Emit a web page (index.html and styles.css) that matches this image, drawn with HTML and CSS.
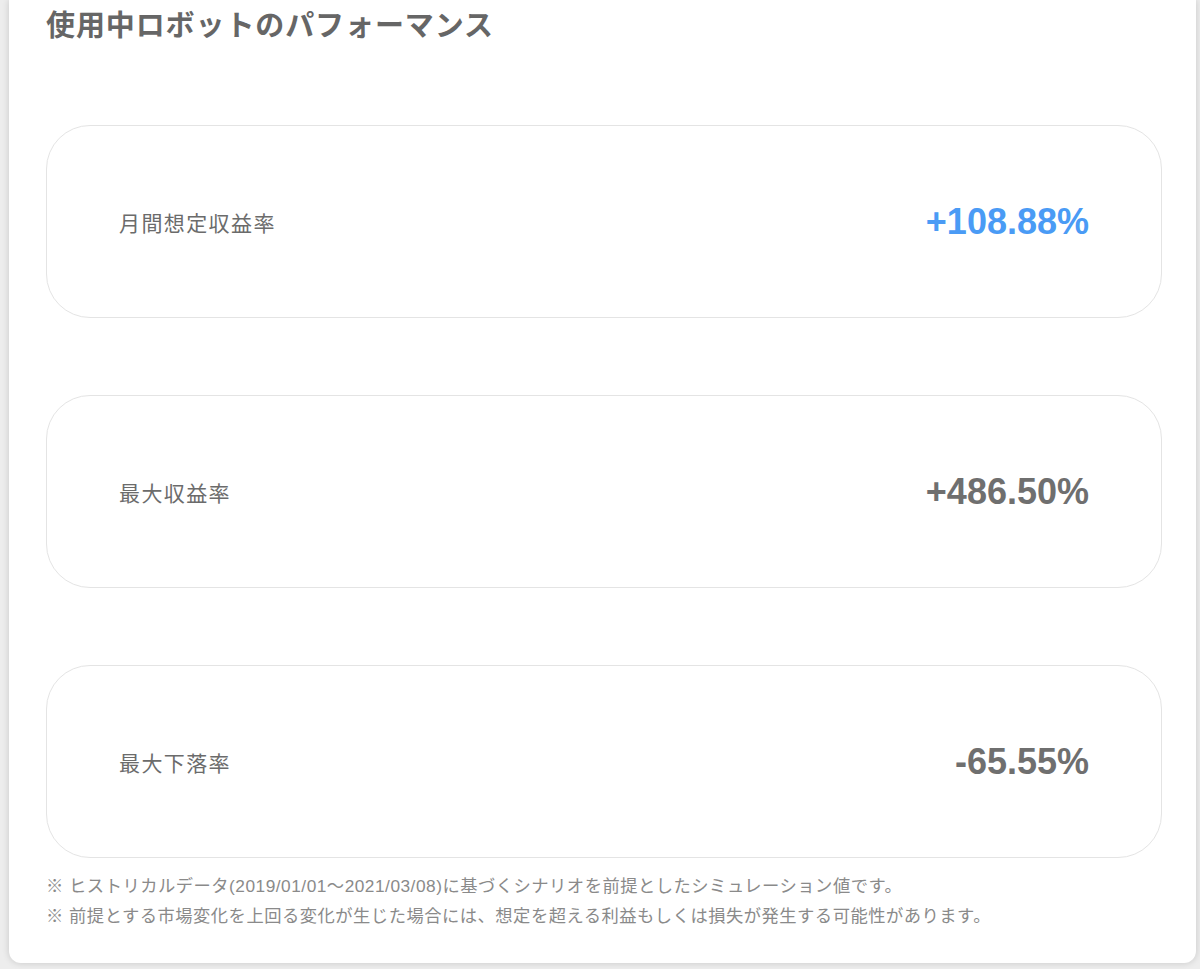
FILE: index.html
```html
<!DOCTYPE html>
<html lang="ja">
<head>
    <meta charset="UTF-8">
    <meta name="viewport" content="width=device-width, initial-scale=1.0">
    <title>使用中ロボットのパフォーマンス</title>
    <link rel="stylesheet" href="styles.css">
</head>
<body>

    <section class="panel">
        <h2 class="panel-title">使用中ロボットのパフォーマンス</h2>

        <div class="stat-list">
            <div class="stat-card">
                <span class="stat-label">月間想定収益率</span>
                <span class="stat-value stat-value--up">+108.88%</span>
            </div>
            <div class="stat-card">
                <span class="stat-label">最大収益率</span>
                <span class="stat-value">+486.50%</span>
            </div>
            <div class="stat-card">
                <span class="stat-label">最大下落率</span>
                <span class="stat-value">-65.55%</span>
            </div>
        </div>

        <ul class="notes">
            <li>※ ヒストリカルデータ(2019/01/01～2021/03/08)に基づくシナリオを前提としたシミュレーション値です。</li>
            <li>※ 前提とする市場変化を上回る変化が生じた場合には、想定を超える利益もしくは損失が発生する可能性があります。</li>
        </ul>
    </section>

</body>
</html>
```

FILE: styles.css
```css
html, body {
    margin: 0;
    background-color: #ededed;
}

body {
    font-family: 'Liberation Sans', 'Noto Sans CJK JP', sans-serif;
    color: #666666;
    padding: 0 4px 6px 9px;
    box-sizing: border-box;
    min-height: 969px;
}

.panel {
    background-color: #ffffff;
    border-radius: 0 0 12px 12px;
    box-shadow: 0 0 7px rgba(0, 0, 0, 0.16);
    padding: 5px 34px 32px 37px;
}

.panel-title {
    margin: 0;
    font-size: 29px;
    line-height: 42px;
    font-weight: bold;
    letter-spacing: 0.9px;
    color: #666666;
}

.stat-list {
    display: flex;
    flex-direction: column;
    gap: 77px;
    margin-top: 78px;
}

.stat-card {
    display: flex;
    align-items: center;
    justify-content: space-between;
    height: 193px;
    box-sizing: border-box;
    padding: 0 72px;
    border: 1.5px solid #e4e4e4;
    border-radius: 44px;
}

.stat-label {
    font-size: 21px;
    letter-spacing: 1.4px;
    color: #6b6b6b;
}

.stat-value {
    font-size: 36px;
    font-weight: bold;
    color: #6f6f6f;
}

.stat-value--up {
    color: #4a9bf5;
}

.notes {
    list-style: none;
    margin: 13px 0 0;
    padding: 0;
    font-size: 17.3px;
    line-height: 30px;
    letter-spacing: 0.5px;
    color: #8a8a8a;
}
```
